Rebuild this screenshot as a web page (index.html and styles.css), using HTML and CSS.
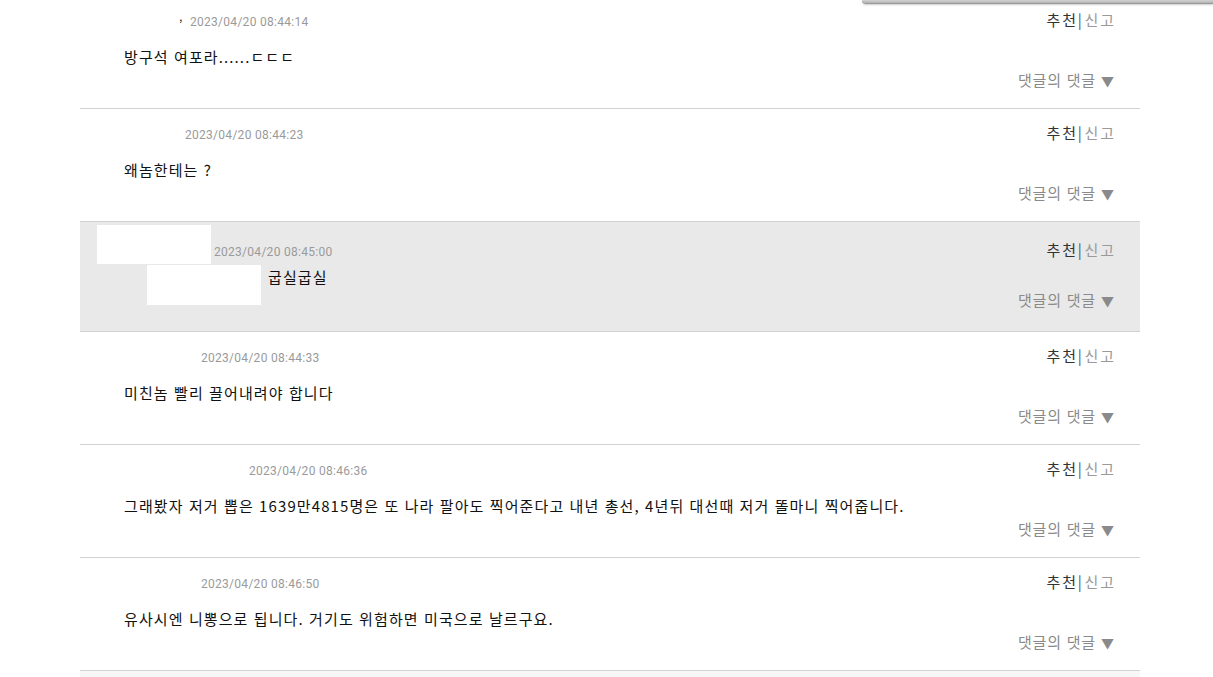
FILE: index.html
```html
<!DOCTYPE html>
<html lang="ko">
<head>
<meta charset="utf-8">
<title>댓글</title>
<link rel="stylesheet" href="styles.css">
</head>
<body>
<div class="topbar"></div>
<div class="comments">
  <div class="row">
    <div class="main">
      <div class="meta"><span class="nick nick-1"><span class="frag">&#8217;</span></span><span class="date">2023/04/20 08:44:14</span></div>
      <p class="text">방구석 여포라......ㄷㄷㄷ</p>
    </div>
    <div class="side">
      <div class="acts"><span class="rec">추천</span><span class="bar">|</span><span class="rep">신고</span></div>
      <div class="reply">댓글의 댓글 <span class="tri">&#9660;</span></div>
    </div>
  </div>
  <div class="row">
    <div class="main">
      <div class="meta"><span class="nick nick-2"></span><span class="date">2023/04/20 08:44:23</span></div>
      <p class="text">왜놈한테는 ?</p>
    </div>
    <div class="side">
      <div class="acts"><span class="rec">추천</span><span class="bar">|</span><span class="rep">신고</span></div>
      <div class="reply">댓글의 댓글 <span class="tri">&#9660;</span></div>
    </div>
  </div>
  <div class="row row-hl">
    <div class="main">
      <div class="meta-hl"><span class="blank"></span><span class="date">2023/04/20 08:45:00</span></div>
      <div class="body-hl"><span class="blank"></span><p class="text-hl">굽실굽실</p></div>
    </div>
    <div class="side side-hl">
      <div class="acts"><span class="rec">추천</span><span class="bar">|</span><span class="rep">신고</span></div>
      <div class="reply">댓글의 댓글 <span class="tri">&#9660;</span></div>
    </div>
  </div>
  <div class="row">
    <div class="main">
      <div class="meta"><span class="nick nick-3"></span><span class="date">2023/04/20 08:44:33</span></div>
      <p class="text">미친놈 빨리 끌어내려야 합니다</p>
    </div>
    <div class="side">
      <div class="acts"><span class="rec">추천</span><span class="bar">|</span><span class="rep">신고</span></div>
      <div class="reply">댓글의 댓글 <span class="tri">&#9660;</span></div>
    </div>
  </div>
  <div class="row">
    <div class="main">
      <div class="meta"><span class="nick nick-4"></span><span class="date">2023/04/20 08:46:36</span></div>
      <p class="text">그래봤자 저거 뽑은 1639만4815명은 또 나라 팔아도 찍어준다고 내년 총선, 4년뒤 대선때 저거 똘마니 찍어줍니다.</p>
    </div>
    <div class="side">
      <div class="acts"><span class="rec">추천</span><span class="bar">|</span><span class="rep">신고</span></div>
      <div class="reply">댓글의 댓글 <span class="tri">&#9660;</span></div>
    </div>
  </div>
  <div class="row">
    <div class="main">
      <div class="meta"><span class="nick nick-3"></span><span class="date">2023/04/20 08:46:50</span></div>
      <p class="text">유사시엔 니뽕으로 됩니다. 거기도 위험하면 미국으로 날르구요.</p>
    </div>
    <div class="side">
      <div class="acts"><span class="rec">추천</span><span class="bar">|</span><span class="rep">신고</span></div>
      <div class="reply">댓글의 댓글 <span class="tri">&#9660;</span></div>
    </div>
  </div>
  <div class="row row-next"></div>
</div>
</body>
</html>
```

FILE: styles.css
```css
html, body {
  margin: 0;
  padding: 0;
  background: #fff;
}
body {
  font-family: "Noto Sans CJK KR", "Noto Sans", sans-serif;
  font-size: 15px;
  color: #111;
  overflow: hidden;
}
.topbar {
  position: absolute;
  top: 0;
  right: 0;
  width: 351px;
  height: 3px;
  background: linear-gradient(#d2d2d2, #b4b4b4);
  border-bottom: 1px solid #999;
  border-bottom-left-radius: 9px;
  box-shadow: 0 1px 2px rgba(0,0,0,0.2);
}
.comments {
  width: 1060px;
  margin: -4px 0 0 80px;
}
.row {
  display: flex;
  justify-content: space-between;
  height: 112px;
  border-bottom: 1px solid #d2d2d2;
}
.main {
  flex: 1;
  padding-top: 16px;
}
.meta {
  display: flex;
  height: 20px;
  line-height: 20px;
}
.nick { display: inline-block; position: relative; }
.nick-1 { width: 110px; }
.nick-2 { width: 105px; }
.nick-3 { width: 121px; }
.nick-4 { width: 169px; }
.frag {
  position: absolute;
  left: 99px;
  top: 2px;
  font-size: 12px;
  color: #222;
}
.date {
  font-family: Roboto, "Liberation Sans", sans-serif;
  font-size: 12px;
  letter-spacing: 0.28px;
  color: #9a9a9a;
}
.text {
  margin: 15px 0 0 44px;
  line-height: 20px;
  letter-spacing: 1.1px;
  color: #111;
}
.side {
  display: flex;
  flex-direction: column;
  align-items: flex-end;
  padding: 14px 26px 0 0;
  line-height: 20px;
}
.acts { letter-spacing: 1.8px; margin-right: -1.8px; }
.rec { color: #333; }
.bar { color: #555; margin: 0 1px 0 0; }
.rep { color: #9a9a9a; }
.reply {
  margin-top: 40px;
  color: #8a8a8a;
  letter-spacing: 0.8px;
}
.tri {
  font-size: 13px;
  color: #8a8a8a;
  letter-spacing: 0;
}
.row-hl {
  height: 109px;
  background: #e9e9e9;
}
.row-hl .main { padding-top: 3px; }
.meta-hl {
  display: flex;
  align-items: flex-end;
  margin-left: 17px;
}
.meta-hl .blank { margin-right: 3px; }
.meta-hl .date { line-height: 16px; margin-bottom: 4px; }
.blank {
  display: inline-block;
  width: 114px;
  height: 39px;
  background: #fff;
}
.body-hl {
  display: flex;
  align-items: flex-start;
  margin: 1px 0 0 67px;
}
.body-hl .blank { height: 40px; }
.text-hl {
  margin: 2px 0 0 7px;
  line-height: 20px;
  letter-spacing: 1.1px;
}
.side-hl { padding-top: 18px; }
.side-hl .reply { margin-top: 30px; }
.row-next {
  background: #f7f7f7;
  border-bottom: none;
}
```
